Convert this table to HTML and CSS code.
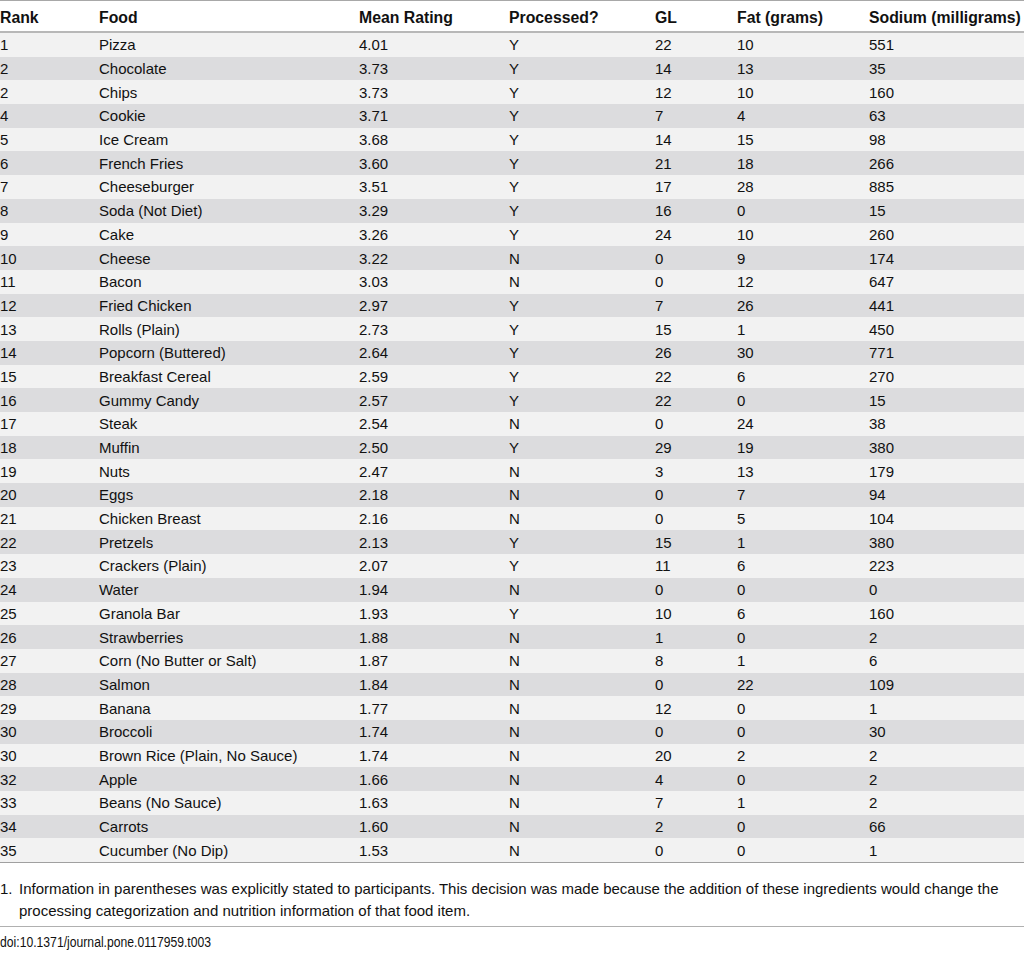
FILE: index.html
```html
<!DOCTYPE html>
<html>
<head>
<meta charset="utf-8">
<link rel="stylesheet" href="styles.css">
</head>
<body>
<div class="page">
<table class="data">
<colgroup>
<col class="c-rank"><col class="c-food"><col class="c-mean"><col class="c-proc"><col class="c-gl"><col class="c-fat"><col class="c-sod">
</colgroup>
<thead>
<tr><th>Rank</th><th>Food</th><th>Mean Rating</th><th>Processed?</th><th>GL</th><th>Fat (grams)</th><th>Sodium (milligrams)</th></tr>
</thead>
<tbody>
<tr><td>1</td><td>Pizza</td><td>4.01</td><td>Y</td><td>22</td><td>10</td><td>551</td></tr>
<tr><td>2</td><td>Chocolate</td><td>3.73</td><td>Y</td><td>14</td><td>13</td><td>35</td></tr>
<tr><td>2</td><td>Chips</td><td>3.73</td><td>Y</td><td>12</td><td>10</td><td>160</td></tr>
<tr><td>4</td><td>Cookie</td><td>3.71</td><td>Y</td><td>7</td><td>4</td><td>63</td></tr>
<tr><td>5</td><td>Ice Cream</td><td>3.68</td><td>Y</td><td>14</td><td>15</td><td>98</td></tr>
<tr><td>6</td><td>French Fries</td><td>3.60</td><td>Y</td><td>21</td><td>18</td><td>266</td></tr>
<tr><td>7</td><td>Cheeseburger</td><td>3.51</td><td>Y</td><td>17</td><td>28</td><td>885</td></tr>
<tr><td>8</td><td>Soda (Not Diet)</td><td>3.29</td><td>Y</td><td>16</td><td>0</td><td>15</td></tr>
<tr><td>9</td><td>Cake</td><td>3.26</td><td>Y</td><td>24</td><td>10</td><td>260</td></tr>
<tr><td>10</td><td>Cheese</td><td>3.22</td><td>N</td><td>0</td><td>9</td><td>174</td></tr>
<tr><td>11</td><td>Bacon</td><td>3.03</td><td>N</td><td>0</td><td>12</td><td>647</td></tr>
<tr><td>12</td><td>Fried Chicken</td><td>2.97</td><td>Y</td><td>7</td><td>26</td><td>441</td></tr>
<tr><td>13</td><td>Rolls (Plain)</td><td>2.73</td><td>Y</td><td>15</td><td>1</td><td>450</td></tr>
<tr><td>14</td><td>Popcorn (Buttered)</td><td>2.64</td><td>Y</td><td>26</td><td>30</td><td>771</td></tr>
<tr><td>15</td><td>Breakfast Cereal</td><td>2.59</td><td>Y</td><td>22</td><td>6</td><td>270</td></tr>
<tr><td>16</td><td>Gummy Candy</td><td>2.57</td><td>Y</td><td>22</td><td>0</td><td>15</td></tr>
<tr><td>17</td><td>Steak</td><td>2.54</td><td>N</td><td>0</td><td>24</td><td>38</td></tr>
<tr><td>18</td><td>Muffin</td><td>2.50</td><td>Y</td><td>29</td><td>19</td><td>380</td></tr>
<tr><td>19</td><td>Nuts</td><td>2.47</td><td>N</td><td>3</td><td>13</td><td>179</td></tr>
<tr><td>20</td><td>Eggs</td><td>2.18</td><td>N</td><td>0</td><td>7</td><td>94</td></tr>
<tr><td>21</td><td>Chicken Breast</td><td>2.16</td><td>N</td><td>0</td><td>5</td><td>104</td></tr>
<tr><td>22</td><td>Pretzels</td><td>2.13</td><td>Y</td><td>15</td><td>1</td><td>380</td></tr>
<tr><td>23</td><td>Crackers (Plain)</td><td>2.07</td><td>Y</td><td>11</td><td>6</td><td>223</td></tr>
<tr><td>24</td><td>Water</td><td>1.94</td><td>N</td><td>0</td><td>0</td><td>0</td></tr>
<tr><td>25</td><td>Granola Bar</td><td>1.93</td><td>Y</td><td>10</td><td>6</td><td>160</td></tr>
<tr><td>26</td><td>Strawberries</td><td>1.88</td><td>N</td><td>1</td><td>0</td><td>2</td></tr>
<tr><td>27</td><td>Corn (No Butter or Salt)</td><td>1.87</td><td>N</td><td>8</td><td>1</td><td>6</td></tr>
<tr><td>28</td><td>Salmon</td><td>1.84</td><td>N</td><td>0</td><td>22</td><td>109</td></tr>
<tr><td>29</td><td>Banana</td><td>1.77</td><td>N</td><td>12</td><td>0</td><td>1</td></tr>
<tr><td>30</td><td>Broccoli</td><td>1.74</td><td>N</td><td>0</td><td>0</td><td>30</td></tr>
<tr><td>30</td><td>Brown Rice (Plain, No Sauce)</td><td>1.74</td><td>N</td><td>20</td><td>2</td><td>2</td></tr>
<tr><td>32</td><td>Apple</td><td>1.66</td><td>N</td><td>4</td><td>0</td><td>2</td></tr>
<tr><td>33</td><td>Beans (No Sauce)</td><td>1.63</td><td>N</td><td>7</td><td>1</td><td>2</td></tr>
<tr><td>34</td><td>Carrots</td><td>1.60</td><td>N</td><td>2</td><td>0</td><td>66</td></tr>
<tr><td>35</td><td>Cucumber (No Dip)</td><td>1.53</td><td>N</td><td>0</td><td>0</td><td>1</td></tr>
</tbody>
</table>
<div class="notes">
<p class="note"><span class="num">1.</span><span class="ntext">Information in parentheses was explicitly stated to participants. This decision was made because the addition of these ingredients would change the processing categorization and nutrition information of that food item.</span></p>
</div>
<p class="doi">doi:10.1371/journal.pone.0117959.t003</p>
</div>
</body>
</html>
```

FILE: styles.css
```css
html, body {
  margin: 0;
  padding: 0;
  background: #ffffff;
}
body {
  font-family: "Liberation Sans", Arial, sans-serif;
  color: #111;
  width: 1024px;
  overflow: hidden;
}
.page {
  width: 1024px;
}
.data {
  width: 1024px;
  table-layout: fixed;
  border-collapse: collapse;
  font-size: 15px;
  border-top: 1px solid #a8a8a8;
  border-bottom: 1px solid #a0a0a0;
}
.c-rank { width: 99px; }
.c-food { width: 260px; }
.c-mean { width: 150px; }
.c-proc { width: 146px; }
.c-gl { width: 82px; }
.c-fat { width: 132px; }
.c-sod { width: 155px; }
.data th {
  text-align: left;
  font-weight: bold;
  font-size: 15.8px;
  padding: 3px 0 0 0;
  height: 27px;
  vertical-align: middle;
  white-space: nowrap;
  background: #fff;
  border-bottom: 2px solid #b8b8b8;
}
.data td {
  padding: 0;
  height: 23.7px;
  vertical-align: middle;
  white-space: nowrap;
  line-height: 17px;
}
.data tbody tr:nth-child(odd) td { background: #f2f2f2; }
.data tbody tr:nth-child(even) td { background: #dcdcde; }
.notes {
  padding: 15px 0 4px 0;
  border-bottom: 1px solid #b0b0b0;
}
.note {
  margin: 0;
  display: flex;
  font-size: 15px;
  line-height: 22px;
}
.num { width: 19px; flex: none; }
.ntext { flex: 1; padding-right: 10px; }
.doi {
  margin: 6px 0 0 0;
  font-size: 14px;
  line-height: 18px;
  transform: scaleX(0.87);
  transform-origin: left center;
}
```
